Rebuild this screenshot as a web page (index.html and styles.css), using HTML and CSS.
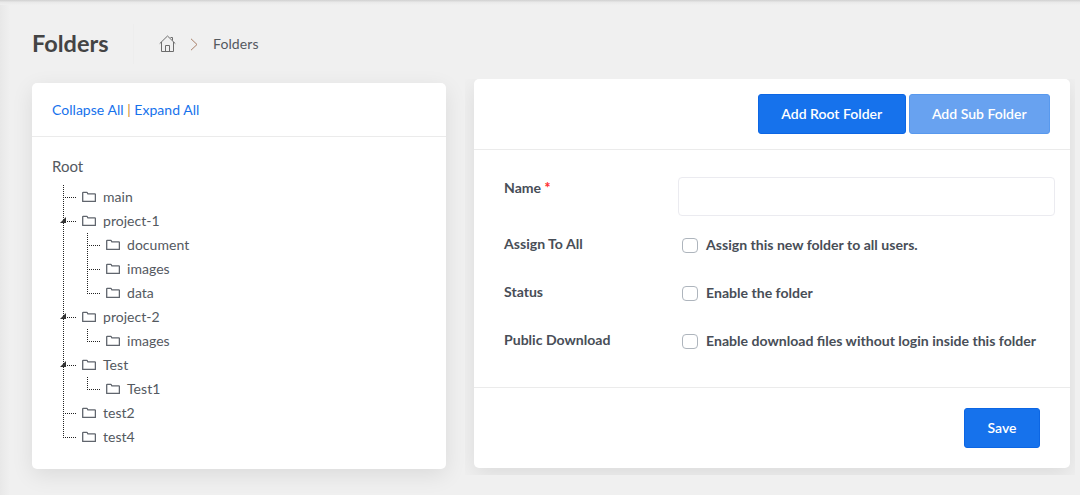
FILE: index.html
```
<!DOCTYPE html>
<html lang="en">
<head>
<meta charset="utf-8">
<title>Folders</title>
<link rel="stylesheet" href="styles.css">
</head>
<body>
<svg class="sprite" width="0" height="0" aria-hidden="true">
  <symbol id="folder" viewBox="0 0 14 12"><path d="M.7 10.400V2Q.7 1.400 1.300 1.400h3.500q.5 0 .6.500l.3.900H12.800q.6 0 .6.600v7z" fill="none" stroke="#60656d" stroke-width="1.300" stroke-linejoin="round"/></symbol>
</svg>
<header class="page-header">
  <h1 class="title"><span>Folders</span></h1>
  <nav class="crumbs">
    <svg class="home" width="17" height="17" viewBox="0 0 17 17" fill="none" stroke="#6c6c6c"><path d="M.7 8.600 8.500 1l7.800 7.600M2.500 7v9.500h12V7M6.500 16v-5.500h4V16M11.500 2.500h2v3"/></svg>
    <svg class="chevron" width="8" height="13" viewBox="0 0 8 13" fill="none" stroke="#a87f68"><path d="m1 .8 6 5.700-6 5.700"/></svg>
    <span class="crumb"><span>Folders</span></span>
  </nav>
</header>
<main class="columns">
  <section class="card tree-card">
    <div class="tree-head"><a>Collapse All</a> <i class="bar">|</i> <a>Expand All</a></div>
    <div class="tree-body">
      <div class="root">Root</div>
      <ul class="tree">
        <li><div class="node"><svg><use href="#folder"/></svg>main</div></li>
        <li><div class="node open"><svg><use href="#folder"/></svg>project-1</div>
          <ul>
            <li><div class="node"><svg><use href="#folder"/></svg>document</div></li>
            <li><div class="node"><svg><use href="#folder"/></svg>images</div></li>
            <li><div class="node"><svg><use href="#folder"/></svg>data</div></li>
          </ul></li>
        <li><div class="node open"><svg><use href="#folder"/></svg>project-2</div>
          <ul><li><div class="node"><svg><use href="#folder"/></svg>images</div></li></ul></li>
        <li><div class="node open"><svg><use href="#folder"/></svg>Test</div>
          <ul><li><div class="node"><svg><use href="#folder"/></svg>Test1</div></li></ul></li>
        <li><div class="node"><svg><use href="#folder"/></svg>test2</div></li>
        <li><div class="node"><svg><use href="#folder"/></svg>test4</div></li>
      </ul>
    </div>
  </section>
  <div class="form-wrap">
    <form class="card form-card">
      <div class="form-head"><button type="button" class="btn">Add Root Folder</button><button type="button" class="btn muted">Add Sub Folder</button></div>
      <div class="form-body">
        <div class="row name-row"><span class="label">Name <b class="req">*</b></span><input class="field" type="text"></div>
        <div class="row"><span class="label">Assign To All</span><label class="check"><i class="box"></i><span>Assign this new folder to all users.</span></label></div>
        <div class="row"><span class="label">Status</span><label class="check"><i class="box"></i><span>Enable the folder</span></label></div>
        <div class="row"><span class="label">Public Download</span><label class="check"><i class="box"></i><span>Enable download files without login inside this folder</span></label></div>
      </div>
      <div class="form-foot"><button type="button" class="btn save">Save</button></div>
    </form>
  </div>
</main>
</body>
</html>
```
FILE: styles.css
```
* { box-sizing: border-box; }
body {
  margin: 0;
  height: 495px;
  overflow: hidden;
  font: 14px/20px Lato, sans-serif;
  color: #54595f;
  background:
    linear-gradient(#d2d2d2, #d9d9d9 1px, #e8e8e8 2px, #f0f0f0 5px, transparent 5px) no-repeat,
    linear-gradient(90deg, #e8e8e8, #f0f0f0 10px) #f0f0f0;
}
.sprite { display: block; }
.page-header { display: flex; height: 79px; padding: 24px 0 0 32px; }
.title {
  width: 102px;
  height: 40px;
  margin: 0;
  border-right: 1px solid #ededed;
  font-size: 23.500px;
  line-height: 39px;
  font-weight: 700;
  color: #444;
}
.crumbs { display: flex; align-items: center; height: 40px; padding-left: 25px; }
.crumb { letter-spacing: .1px; }
.chevron { margin: 1px 15px 0 14px; }
.home { margin-top: -2px; }
.columns { display: flex; align-items: flex-start; }
.card { background: #fff; border-radius: 5px; box-shadow: 0 6px 22px rgba(0, 0, 0, .09); }
.tree-card { width: 414px; height: 386px; margin: 4px 0 0 32px; }
.tree-head { height: 54px; padding: 17px 20px 0; border-bottom: 1px solid #ebebeb; color: #1672ec; letter-spacing: .03px; }
.bar { font-style: normal; color: #d08a30; }
.tree-body { padding: 19px 20px 0; }
.root { font-size: 15px; height: 29px; }
.tree, .tree ul { list-style: none; margin: 0; padding: 0; }
.tree { margin-left: 11px; }
.tree ul { margin-left: 24px; }
.tree li {
  background:
    repeating-linear-gradient(#222 0 1px, transparent 1px 2px) 0 0 / 1px 100% no-repeat,
    repeating-linear-gradient(90deg, #222 0 1px, transparent 1px 2px) 0 12px / 13px 1px no-repeat;
}
.tree li:last-child {
  background:
    repeating-linear-gradient(#222 0 1px, transparent 1px 2px) 0 0 / 1px 12px no-repeat,
    repeating-linear-gradient(90deg, #222 0 1px, transparent 1px 2px) 0 12px / 13px 1px no-repeat;
}
.node { position: relative; display: flex; align-items: center; height: 24px; padding-left: 19px; letter-spacing: .04px; }
.node svg { width: 14px; height: 12px; margin-right: 7px; }
.open::before {
  content: "";
  position: absolute;
  left: -3px;
  top: 8px;
  width: 6px;
  height: 6px;
  background: #333;
  clip-path: polygon(100% 0, 100% 100%, 0 100%);
}
.form-wrap { width: 610px; height: 396px; margin-left: 19px; padding-left: 9px; overflow: hidden; }
.form-card { width: 596px; height: 389px; }
.form-head { display: flex; justify-content: flex-end; gap: 3px; height: 71px; padding: 15px 20px 0; border-bottom: 1px solid #ebebeb; }
.btn {
  width: 147.500px;
  height: 40px;
  padding: 0;
  border: 1px solid #0c66e4;
  border-radius: 3px;
  background: #1672ec;
  color: #fff;
  font: 600 14px/38px Lato, sans-serif;
}
.muted { width: 141.500px; background: #68a2f0; border-color: #5899ee; }
.save { width: 76px; }
.form-body { height: 238px; padding: 28px 15px 0 30px; border-bottom: 1px solid #ebebeb; font-size: 14.080px; font-weight: 700; color: #484e57; }
.row { display: grid; grid-template-columns: 174px 1fr; height: 48px; }
.name-row { height: 56px; }
.req { color: #f33; }
.field { width: 377px; height: 39px; margin-top: -1px; border: 1px solid #ebebf0; border-radius: 4px; background: #fff; }
.check { display: flex; align-items: center; height: 22px; padding-left: 4px; gap: 8px; }
.box { width: 16px; height: 15px; border: 1px solid #aeb5bd; border-radius: 4px; }
.form-foot { display: flex; justify-content: flex-end; padding: 20px 30px 0; }
```
